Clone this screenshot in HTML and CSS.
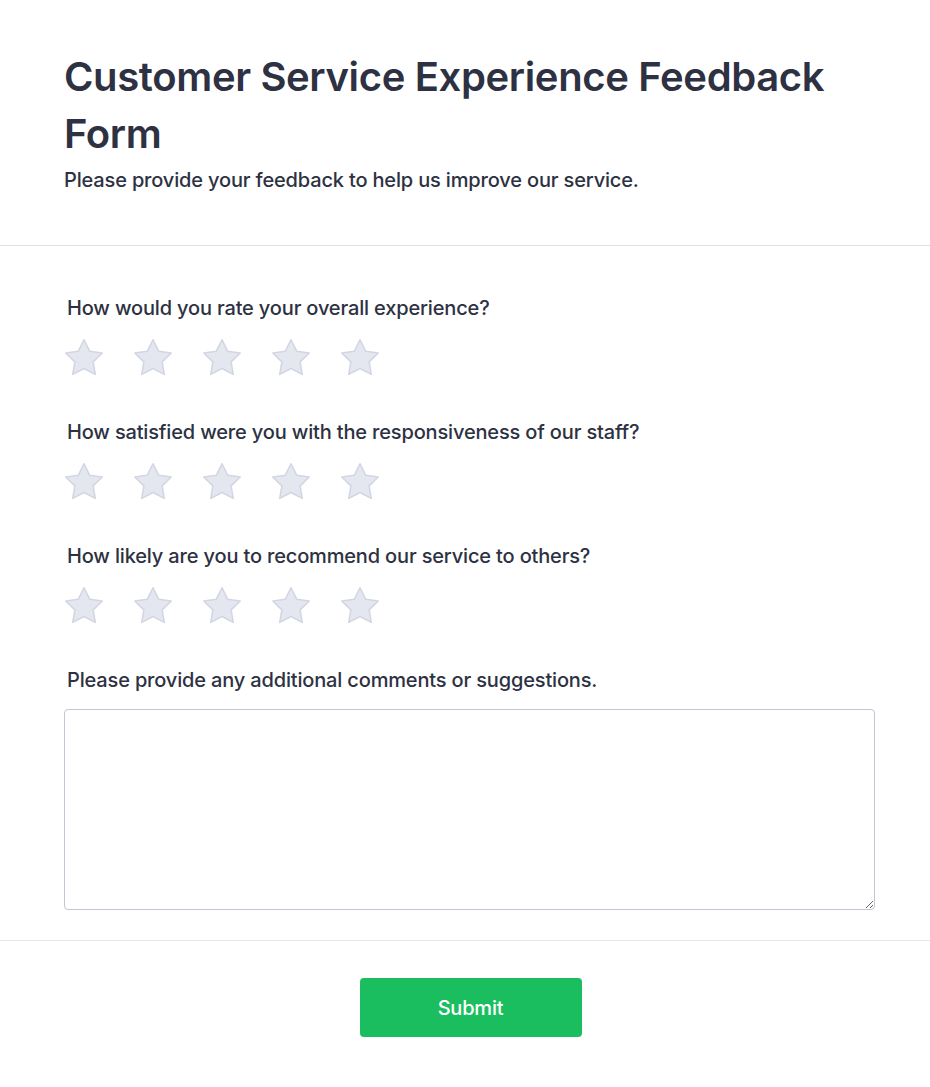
FILE: index.html
```html
<!DOCTYPE html>
<html lang="en">
<head>
<meta charset="utf-8">
<title>Customer Service Experience Feedback Form</title>
<link rel="stylesheet" href="styles.css">
</head>
<body>
<form class="form">
  <header class="form-header">
    <h1 class="form-title">Customer Service Experience Feedback Form</h1>
    <p class="form-subtitle">Please provide your feedback to help us improve our service.</p>
  </header>
  <section class="form-body">
    <div class="question">
      <label class="question-label">How would you rate your overall experience?</label>
      <div class="stars">
        <svg class="star" viewBox="1.6 1.6 20.8 19.8"><path d="M12 2.5l2.94 5.96 6.56.96-4.75 4.63 1.12 6.54L12 17.5l-5.87 3.09 1.12-6.54-4.75-4.63 6.56-.96z"/></svg>
        <svg class="star" viewBox="1.6 1.6 20.8 19.8"><path d="M12 2.5l2.94 5.96 6.56.96-4.75 4.63 1.12 6.54L12 17.5l-5.87 3.09 1.12-6.54-4.75-4.63 6.56-.96z"/></svg>
        <svg class="star" viewBox="1.6 1.6 20.8 19.8"><path d="M12 2.5l2.94 5.96 6.56.96-4.75 4.63 1.12 6.54L12 17.5l-5.87 3.09 1.12-6.54-4.75-4.63 6.56-.96z"/></svg>
        <svg class="star" viewBox="1.6 1.6 20.8 19.8"><path d="M12 2.5l2.94 5.96 6.56.96-4.75 4.63 1.12 6.54L12 17.5l-5.87 3.09 1.12-6.54-4.75-4.63 6.56-.96z"/></svg>
        <svg class="star" viewBox="1.6 1.6 20.8 19.8"><path d="M12 2.5l2.94 5.96 6.56.96-4.75 4.63 1.12 6.54L12 17.5l-5.87 3.09 1.12-6.54-4.75-4.63 6.56-.96z"/></svg>
      </div>
    </div>
    <div class="question">
      <label class="question-label">How satisfied were you with the responsiveness of our staff?</label>
      <div class="stars">
        <svg class="star" viewBox="1.6 1.6 20.8 19.8"><path d="M12 2.5l2.94 5.96 6.56.96-4.75 4.63 1.12 6.54L12 17.5l-5.87 3.09 1.12-6.54-4.75-4.63 6.56-.96z"/></svg>
        <svg class="star" viewBox="1.6 1.6 20.8 19.8"><path d="M12 2.5l2.94 5.96 6.56.96-4.75 4.63 1.12 6.54L12 17.5l-5.87 3.09 1.12-6.54-4.75-4.63 6.56-.96z"/></svg>
        <svg class="star" viewBox="1.6 1.6 20.8 19.8"><path d="M12 2.5l2.94 5.96 6.56.96-4.75 4.63 1.12 6.54L12 17.5l-5.87 3.09 1.12-6.54-4.75-4.63 6.56-.96z"/></svg>
        <svg class="star" viewBox="1.6 1.6 20.8 19.8"><path d="M12 2.5l2.94 5.96 6.56.96-4.75 4.63 1.12 6.54L12 17.5l-5.87 3.09 1.12-6.54-4.75-4.63 6.56-.96z"/></svg>
        <svg class="star" viewBox="1.6 1.6 20.8 19.8"><path d="M12 2.5l2.94 5.96 6.56.96-4.75 4.63 1.12 6.54L12 17.5l-5.87 3.09 1.12-6.54-4.75-4.63 6.56-.96z"/></svg>
      </div>
    </div>
    <div class="question">
      <label class="question-label">How likely are you to recommend our service to others?</label>
      <div class="stars">
        <svg class="star" viewBox="1.6 1.6 20.8 19.8"><path d="M12 2.5l2.94 5.96 6.56.96-4.75 4.63 1.12 6.54L12 17.5l-5.87 3.09 1.12-6.54-4.75-4.63 6.56-.96z"/></svg>
        <svg class="star" viewBox="1.6 1.6 20.8 19.8"><path d="M12 2.5l2.94 5.96 6.56.96-4.75 4.63 1.12 6.54L12 17.5l-5.87 3.09 1.12-6.54-4.75-4.63 6.56-.96z"/></svg>
        <svg class="star" viewBox="1.6 1.6 20.8 19.8"><path d="M12 2.5l2.94 5.96 6.56.96-4.75 4.63 1.12 6.54L12 17.5l-5.87 3.09 1.12-6.54-4.75-4.63 6.56-.96z"/></svg>
        <svg class="star" viewBox="1.6 1.6 20.8 19.8"><path d="M12 2.5l2.94 5.96 6.56.96-4.75 4.63 1.12 6.54L12 17.5l-5.87 3.09 1.12-6.54-4.75-4.63 6.56-.96z"/></svg>
        <svg class="star" viewBox="1.6 1.6 20.8 19.8"><path d="M12 2.5l2.94 5.96 6.56.96-4.75 4.63 1.12 6.54L12 17.5l-5.87 3.09 1.12-6.54-4.75-4.63 6.56-.96z"/></svg>
      </div>
    </div>
    <div class="question question-last">
      <label class="question-label" for="comments">Please provide any additional comments or suggestions.</label>
      <textarea id="comments" class="comments"></textarea>
    </div>
  </section>
  <footer class="form-footer">
    <button type="button" class="submit">Submit</button>
  </footer>
</form>
</body>
</html>
```
FILE: styles.css
```css
* { box-sizing: border-box; }
html, body { margin: 0; padding: 0; background: #ffffff; }
body {
  font-family: Inter, "Noto Sans", "Liberation Sans", sans-serif;
  color: #2d3142;
  letter-spacing: -0.01em;
}
.form { width: 930px; }
.form-header {
  padding: 48px 55px 51px 64px;
  border-bottom: 1px solid #dcdfe8;
}
.form-title {
  margin: 0;
  font-size: 40px;
  line-height: 57px;
  font-weight: 600;
  letter-spacing: -0.009em;
  color: #2d3142;
}
.form-subtitle {
  margin: 5px 0 0;
  font-size: 20px;
  line-height: 27px;
  font-weight: 500;
  color: #2d3142;
}
.form-body {
  padding: 49px 55px 30px 64px;
  border-bottom: 1px solid #e8e8f3;
}
.question { margin-bottom: 44px; }
.question-last { margin-bottom: 0; }
.question-label {
  display: block;
  padding-left: 3px;
  font-size: 20px;
  line-height: 27px;
  font-weight: 500;
  color: #2d3142;
}
.stars {
  display: flex;
  gap: 29px;
  margin-top: 18px;
  height: 35px;
}
.star {
  width: 40px;
  height: 38px;
  margin-top: -2px;
  fill: #e5e7f0;
  stroke: #d2d6e2;
  stroke-width: 0.8;
  stroke-linejoin: round;
}
.comments {
  display: block;
  width: 811px;
  height: 201px;
  margin-top: 15px;
  border: 1px solid #c3c6d4;
  border-radius: 4px;
  resize: vertical;
  font-family: inherit;
  font-size: 16px;
  padding: 8px;
  background: #fff;
}
.form-footer {
  display: flex;
  justify-content: center;
  padding: 37px 54px 50px 65px;
}
.submit {
  width: 222px;
  height: 59px;
  border: none;
  border-radius: 4px;
  background: #1bbe5e;
  color: #ffffff;
  font-family: inherit;
  font-size: 20px;
  font-weight: 500;
  letter-spacing: -0.01em;
  cursor: pointer;
}
```
